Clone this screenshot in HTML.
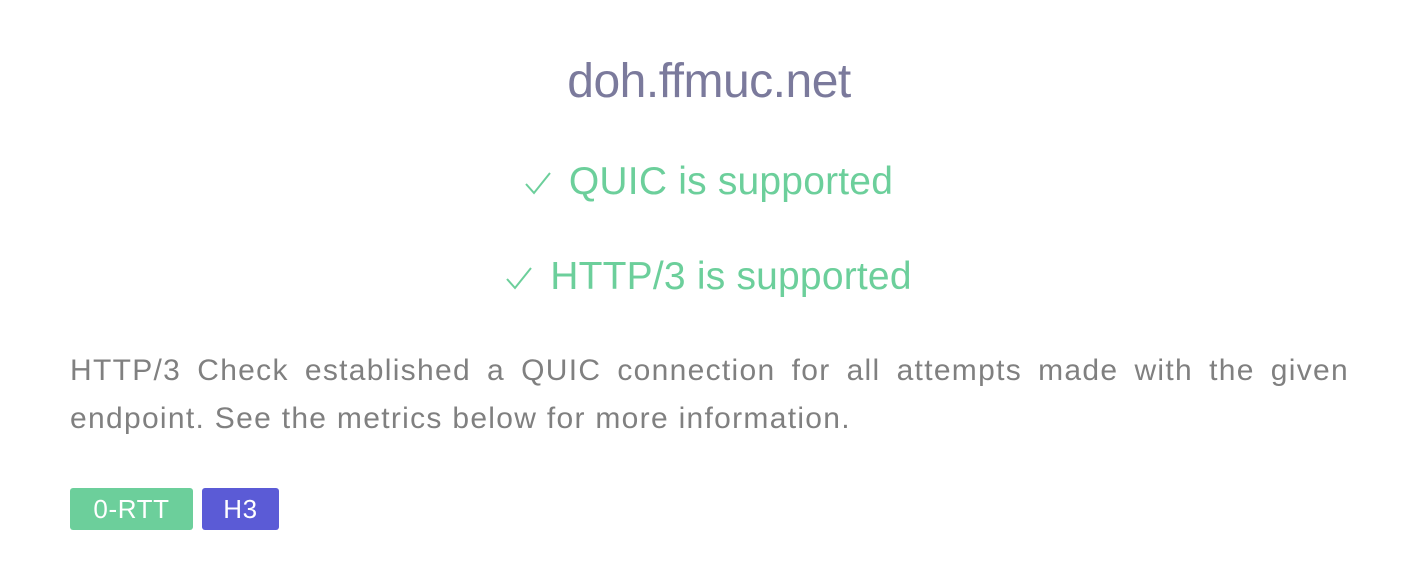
<!DOCTYPE html>
<html><head><style>
body{margin:0;background:#fff;font-family:"Liberation Sans",sans-serif;width:1418px;height:576px;overflow:hidden}
.t{position:absolute;left:0;width:1418px;text-align:center}
h1{position:absolute;left:0;width:1418px;text-align:center;margin:0;top:54px;font-weight:400;font-size:48px;color:#7b7a9c;letter-spacing:-0.5px}
.g{color:#6ccf9b;font-size:39px;letter-spacing:0.2px}
.ck{display:inline-block;width:26px;height:24px;margin-right:18px;vertical-align:-1px}
.p{position:absolute;left:70px;width:1279px;margin:0;font-size:30px;letter-spacing:1.3px;color:#808080}
.j{text-align:justify;text-align-last:justify}
.b{position:absolute;top:488px;height:42px;line-height:42px;color:#fff;font-size:26px;letter-spacing:0.6px;text-align:center;border-radius:3px}
</style></head><body>
<h1>doh.ffmuc.net</h1>
<div class="t g" style="top:160px"><svg class="ck" viewBox="0 0 26 24"><path d="M1 13 L9 22 L25 2" fill="none" stroke="#6ccf9b" stroke-width="2"/></svg>QUIC is supported</div>
<div class="t g" style="top:255px"><svg class="ck" viewBox="0 0 26 24"><path d="M1 13 L9 22 L25 2" fill="none" stroke="#6ccf9b" stroke-width="2"/></svg>HTTP/3 is supported</div>
<div class="p j" style="top:354px">HTTP/3 Check established a QUIC connection for all attempts made with the given</div>
<div class="p" style="top:402px">endpoint. See the metrics below for more information.</div>
<div class="b" style="left:70px;width:123px;background:#6ccf9b">0-RTT</div>
<div class="b" style="left:202px;width:77px;background:#5b5bd6">H3</div>
</body></html>
